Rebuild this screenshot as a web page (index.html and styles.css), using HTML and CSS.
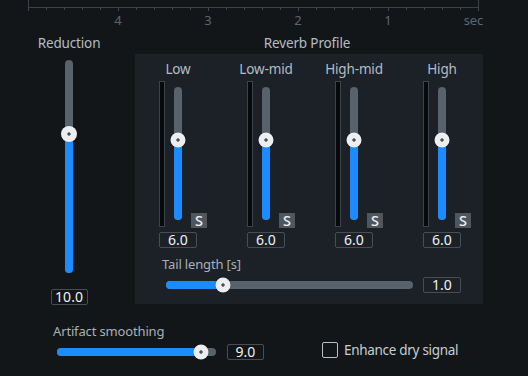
FILE: index.html
```html
<!DOCTYPE html>
<html>
<head>
<meta charset="utf-8">
<link rel="stylesheet" href="styles.css">
</head>
<body>
<div class="app">
  <div class="graph"></div>
  <svg class="ticks" width="452" height="4" viewBox="0 0 452 4">
    <g stroke="#3f4851" stroke-width="1">
      <path d="M0.5 0V3M18.5 0V2M36.5 0V2M54.5 0V2M72.5 0V2M90.5 0V3M108.5 0V2M126.5 0V2M144.5 0V2M162.5 0V2M180.5 0V3M198.5 0V2M216.5 0V2M234.5 0V2M252.5 0V2M270.5 0V3M288.5 0V2M306.5 0V2M324.5 0V2M342.5 0V2M360.5 0V3M378.5 0V2M396.5 0V2M414.5 0V2M432.5 0V2M450.5 0V3"/>
    </g>
  </svg>
  <div class="scale">
    <span>4</span><span>3</span><span>2</span><span>1</span><span class="unit">sec</span>
  </div>

  <div class="main">
    <div class="reduction">
      <div class="title">Reduction</div>
      <div class="vslider big">
        <div class="fill" style="height:139px"></div>
        <div class="thumb" style="bottom:139px"></div>
      </div>
      <div class="value">10.0</div>
    </div>

    <div class="profile">
      <div class="title">Reverb Profile</div>
      <div class="panel">
        <div class="bands">
          <div class="band">
            <div class="band-label">Low</div>
            <div class="band-body">
              <div class="meter"></div>
              <div class="vslider"><div class="fill" style="height:80px"></div><div class="thumb" style="bottom:80px"></div></div>
              <div class="solo">S</div>
            </div>
            <div class="value">6.0</div>
          </div>
          <div class="band">
            <div class="band-label">Low-mid</div>
            <div class="band-body">
              <div class="meter"></div>
              <div class="vslider"><div class="fill" style="height:80px"></div><div class="thumb" style="bottom:80px"></div></div>
              <div class="solo">S</div>
            </div>
            <div class="value">6.0</div>
          </div>
          <div class="band">
            <div class="band-label">High-mid</div>
            <div class="band-body">
              <div class="meter"></div>
              <div class="vslider"><div class="fill" style="height:80px"></div><div class="thumb" style="bottom:80px"></div></div>
              <div class="solo">S</div>
            </div>
            <div class="value">6.0</div>
          </div>
          <div class="band">
            <div class="band-label">High</div>
            <div class="band-body">
              <div class="meter"></div>
              <div class="vslider"><div class="fill" style="height:80px"></div><div class="thumb" style="bottom:80px"></div></div>
              <div class="solo">S</div>
            </div>
            <div class="value">6.0</div>
          </div>
        </div>
        <div class="tail">
          <div class="label">Tail length [s]</div>
          <div class="hrow">
            <div class="hslider tail-slider">
              <div class="hfill" style="width:57px"></div>
              <div class="thumb" style="left:57px"></div>
            </div>
            <div class="value">1.0</div>
          </div>
        </div>
      </div>
    </div>
  </div>

  <div class="bottom">
    <div class="smoothing">
      <div class="label">Artifact smoothing</div>
      <div class="hrow">
        <div class="hslider smooth-slider">
          <div class="hfill" style="width:144px"></div>
          <div class="thumb" style="left:144px"></div>
        </div>
        <div class="value">9.0</div>
      </div>
    </div>
    <div class="check">
      <span class="box"></span>
      <span class="check-text">Enhance dry signal</span>
    </div>
  </div>
</div>
</body>
</html>
```

FILE: styles.css
```css
* { box-sizing: border-box; }
html, body {
  margin: 0;
  padding: 0;
  background: #121619;
}
body {
  width: 528px;
  height: 376px;
  overflow: hidden;
  font-family: "Noto Sans", "Open Sans", sans-serif;
  font-size: 13px;
  letter-spacing: -0.15px;
  color: #aeb6be;
}
.app {
  display: flex;
  flex-direction: column;
}
.graph {
  margin-left: 28px;
  width: 451px;
  height: 8px;
  border: 1px solid #3a434b;
  border-top: none;
}
.ticks {
  display: block;
  margin-left: 28px;
}
.scale {
  display: grid;
  grid-template-columns: repeat(4, 90px) 50px;
  margin-left: 73px;
  height: 16px;
  line-height: 16px;
  color: #5b6670;
  font-size: 13px;
}
.scale span { text-align: center; }
.scale .unit { text-align: right; }

.main {
  display: flex;
  margin-top: 7px;
}
.title {
  height: 16px;
  line-height: 16px;
  text-align: center;
  white-space: nowrap;
  color: #b4bcc4;
  font-size: 13.5px;
}
.reduction {
  margin-left: 39px;
  width: 60px;
  display: flex;
  flex-direction: column;
  align-items: center;
}
.reduction .vslider { margin-top: 9px; height: 213px; }
.reduction .value { margin-top: 16px; width: 37px; }

.vslider {
  position: relative;
  width: 8px;
  height: 133px;
  border-radius: 4px;
  background: #58626c;
}
.fill {
  position: absolute;
  left: 0;
  bottom: 0;
  width: 100%;
  border-radius: 4px;
  background: #1a8cff;
}
.thumb {
  position: absolute;
  width: 15px;
  height: 15px;
  border-radius: 50%;
  background: radial-gradient(circle, #4a5259 0 1.4px, #eceef0 1.9px);
  box-shadow: 0 0 1px rgba(0,0,0,0.5);
}
.vslider .thumb {
  left: 50%;
  transform: translate(-50%, 50%);
}
.vslider.big .thumb { width: 16px; height: 16px; }

.profile {
  margin-left: 36px;
  width: 348px;
  display: flex;
  flex-direction: column;
}
.profile .title { padding-right: 4px; }
.panel {
  margin-top: 3px;
  background: #1c2128;
  padding: 7px 0 11px 24px;
}
.bands {
  display: flex;
  gap: 40px;
}
.band {
  width: 48px;
  display: flex;
  flex-direction: column;
}
.band-label {
  width: 38px;
  height: 16px;
  line-height: 16px;
  text-align: center;
  white-space: nowrap;
  display: flex;
  justify-content: center;
  color: #b4bcc4;
  font-size: 13.5px;
}
.band-body {
  margin-top: 4px;
  display: flex;
  align-items: flex-end;
  height: 146px;
}
.meter {
  width: 6px;
  height: 146px;
  background: #07090b;
  border: 1px solid #3b434b;
  align-self: flex-start;
}
.band-body .vslider {
  margin-left: 9px;
  align-self: flex-start;
  margin-top: 6px;
}
.solo {
  margin-left: 9px;
  margin-bottom: -1px;
  width: 16px;
  height: 15px;
  line-height: 15px;
  background: #4e575f;
  color: #eef2f5;
  font-size: 14.5px;
  font-weight: 500;
  text-align: center;
  letter-spacing: 0;
}
.band .value { margin-top: 5px; width: 38px; }

.value {
  height: 16px;
  line-height: 14px;
  border: 1px solid #454e57;
  border-radius: 2px;
  color: #f0f2f4;
  text-align: center;
  font-size: 14px;
  letter-spacing: 0;
}

.tail { margin-top: 8px; }
.label {
  height: 16px;
  line-height: 16px;
  white-space: nowrap;
  color: #a8b0b8;
  font-size: 13px;
}
.tail .label { margin-left: 3px; }
.hrow {
  display: flex;
  align-items: center;
}
.tail .hrow { margin-top: 5px; margin-left: 7px; }
.hslider {
  position: relative;
  height: 8px;
  border-radius: 4px;
  background: #58626c;
}
.hfill {
  position: absolute;
  left: 0;
  top: 0;
  height: 100%;
  border-radius: 4px;
  background: #1a8cff;
}
.hslider .thumb {
  top: 50%;
  transform: translate(-50%, -50%);
}
.tail-slider { width: 247px; }
.tail .value { margin-left: 10px; width: 38px; }

.bottom {
  display: flex;
  align-items: flex-end;
  margin-top: 18px;
}
.smoothing {
  margin-left: 53px;
  display: flex;
  flex-direction: column;
}
.smoothing .hrow { margin-top: 5px; margin-left: 4px; }
.smooth-slider { width: 159px; }
.smoothing .value { margin-left: 11px; width: 37px; }

.check {
  margin-left: 58px;
  margin-bottom: 2px;
  display: flex;
  align-items: center;
  height: 16px;
}
.box {
  width: 16px;
  height: 16px;
  border: 1.5px solid #b9c0c6;
  border-radius: 2px;
}
.check-text {
  margin-left: 6px;
  font-size: 13.5px;
  letter-spacing: -0.3px;
  color: #c8ced4;
  white-space: nowrap;
}
```
